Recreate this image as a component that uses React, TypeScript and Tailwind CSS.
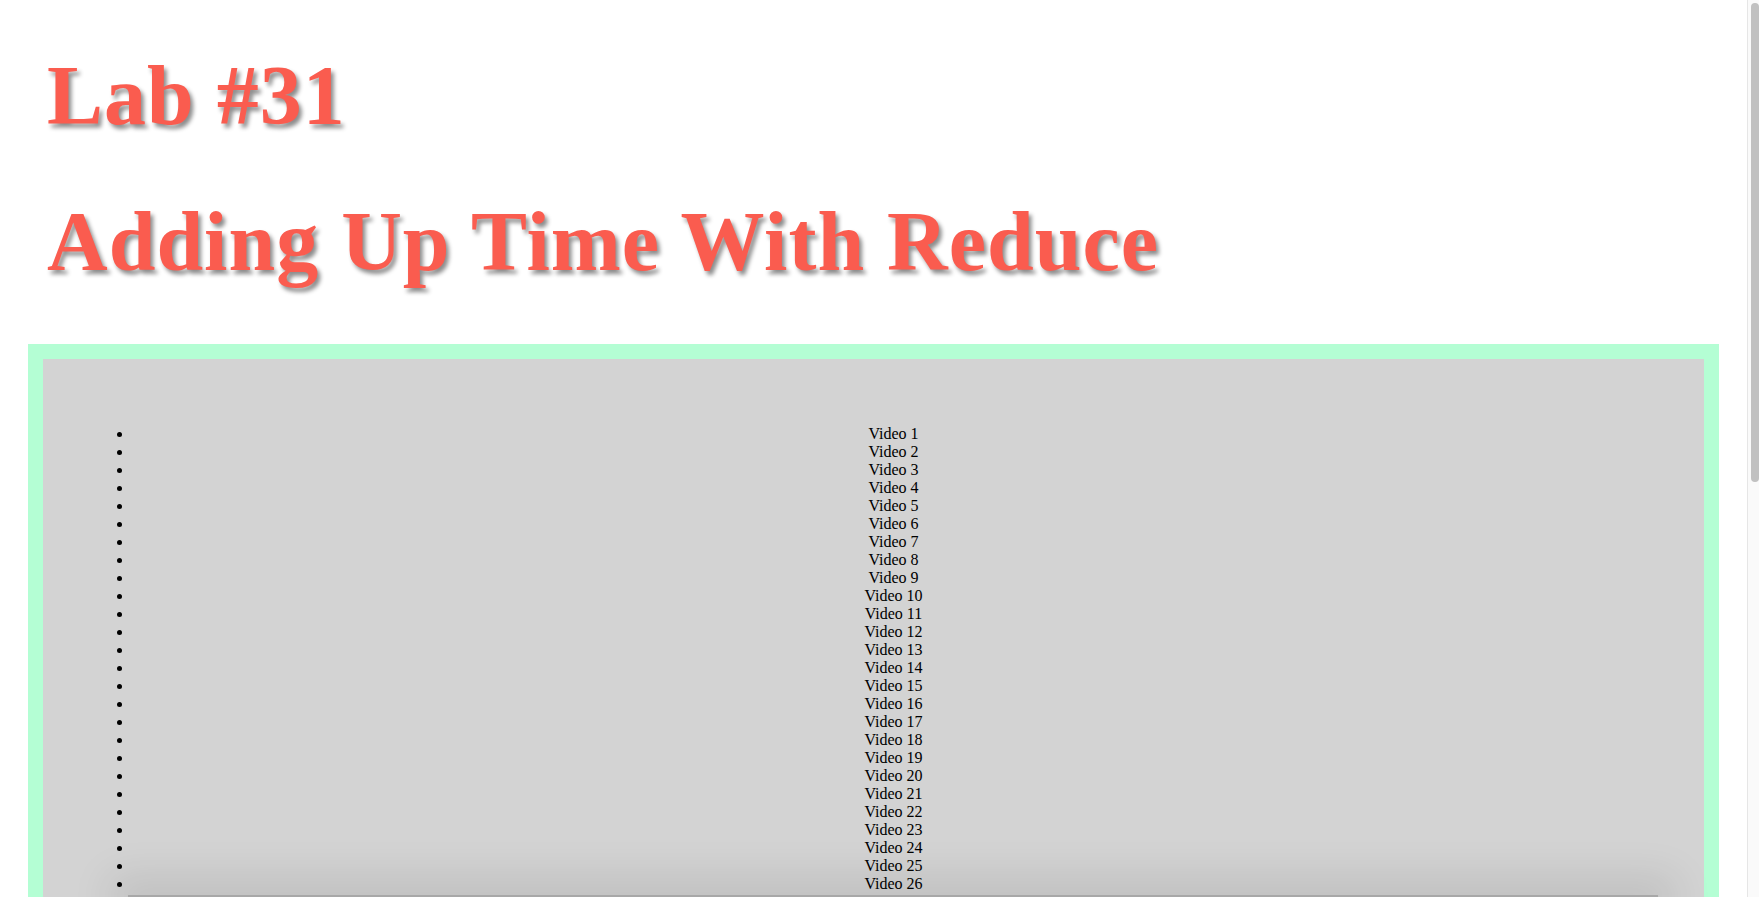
import React from 'react';

const videos = Array.from({ length: 58 }, (_, i) => `Video ${i + 1}`);

const headingClass =
  "font-['Liberation_Serif',serif] font-bold text-[84px] leading-none tracking-[1px] text-[#fa5c4f] [text-shadow:3px_4px_4px_rgba(0,0,0,0.45)]";

export default function App() {
  return (
    <div className="min-h-screen bg-white font-['Liberation_Serif',serif] text-black">
      <div className="mr-[12px]">
        <div className="px-[47px] pt-[54px]">
          <h1 className={headingClass}>Lab #31</h1>
          <h2 className={`${headingClass} mt-[62px]`}>Adding Up Time With Reduce</h2>
        </div>

        <div className="mx-[28px] mt-[60px] border-[15px] border-[#b4fed4] bg-[#d3d3d3] px-[50px] pt-[50px] pb-[50px]">
          <ul className="my-4 list-disc pl-10 text-base leading-[18px]">
            {videos.map((v) => (
              <li key={v} className="text-center">
                {v}
              </li>
            ))}
          </ul>
        </div>
      </div>

      {/* overlay edge peeking in at the bottom of the window */}
      <div className="pointer-events-none fixed bottom-0 left-[128px] h-[2px] w-[1530px] bg-[#a8a8a8] shadow-[0_0_40px_18px_rgba(0,0,0,0.1)]" />

      {/* window scrollbar */}
      <div className="pointer-events-none fixed top-0 right-0 bottom-0 w-[12px] border-l border-[#e6e6e6] bg-[#fafafa]">
        <div className="mt-[3px] ml-[3px] h-[479px] w-[8px] rounded-full bg-[#c1c1c1]" />
      </div>
    </div>
  );
}
